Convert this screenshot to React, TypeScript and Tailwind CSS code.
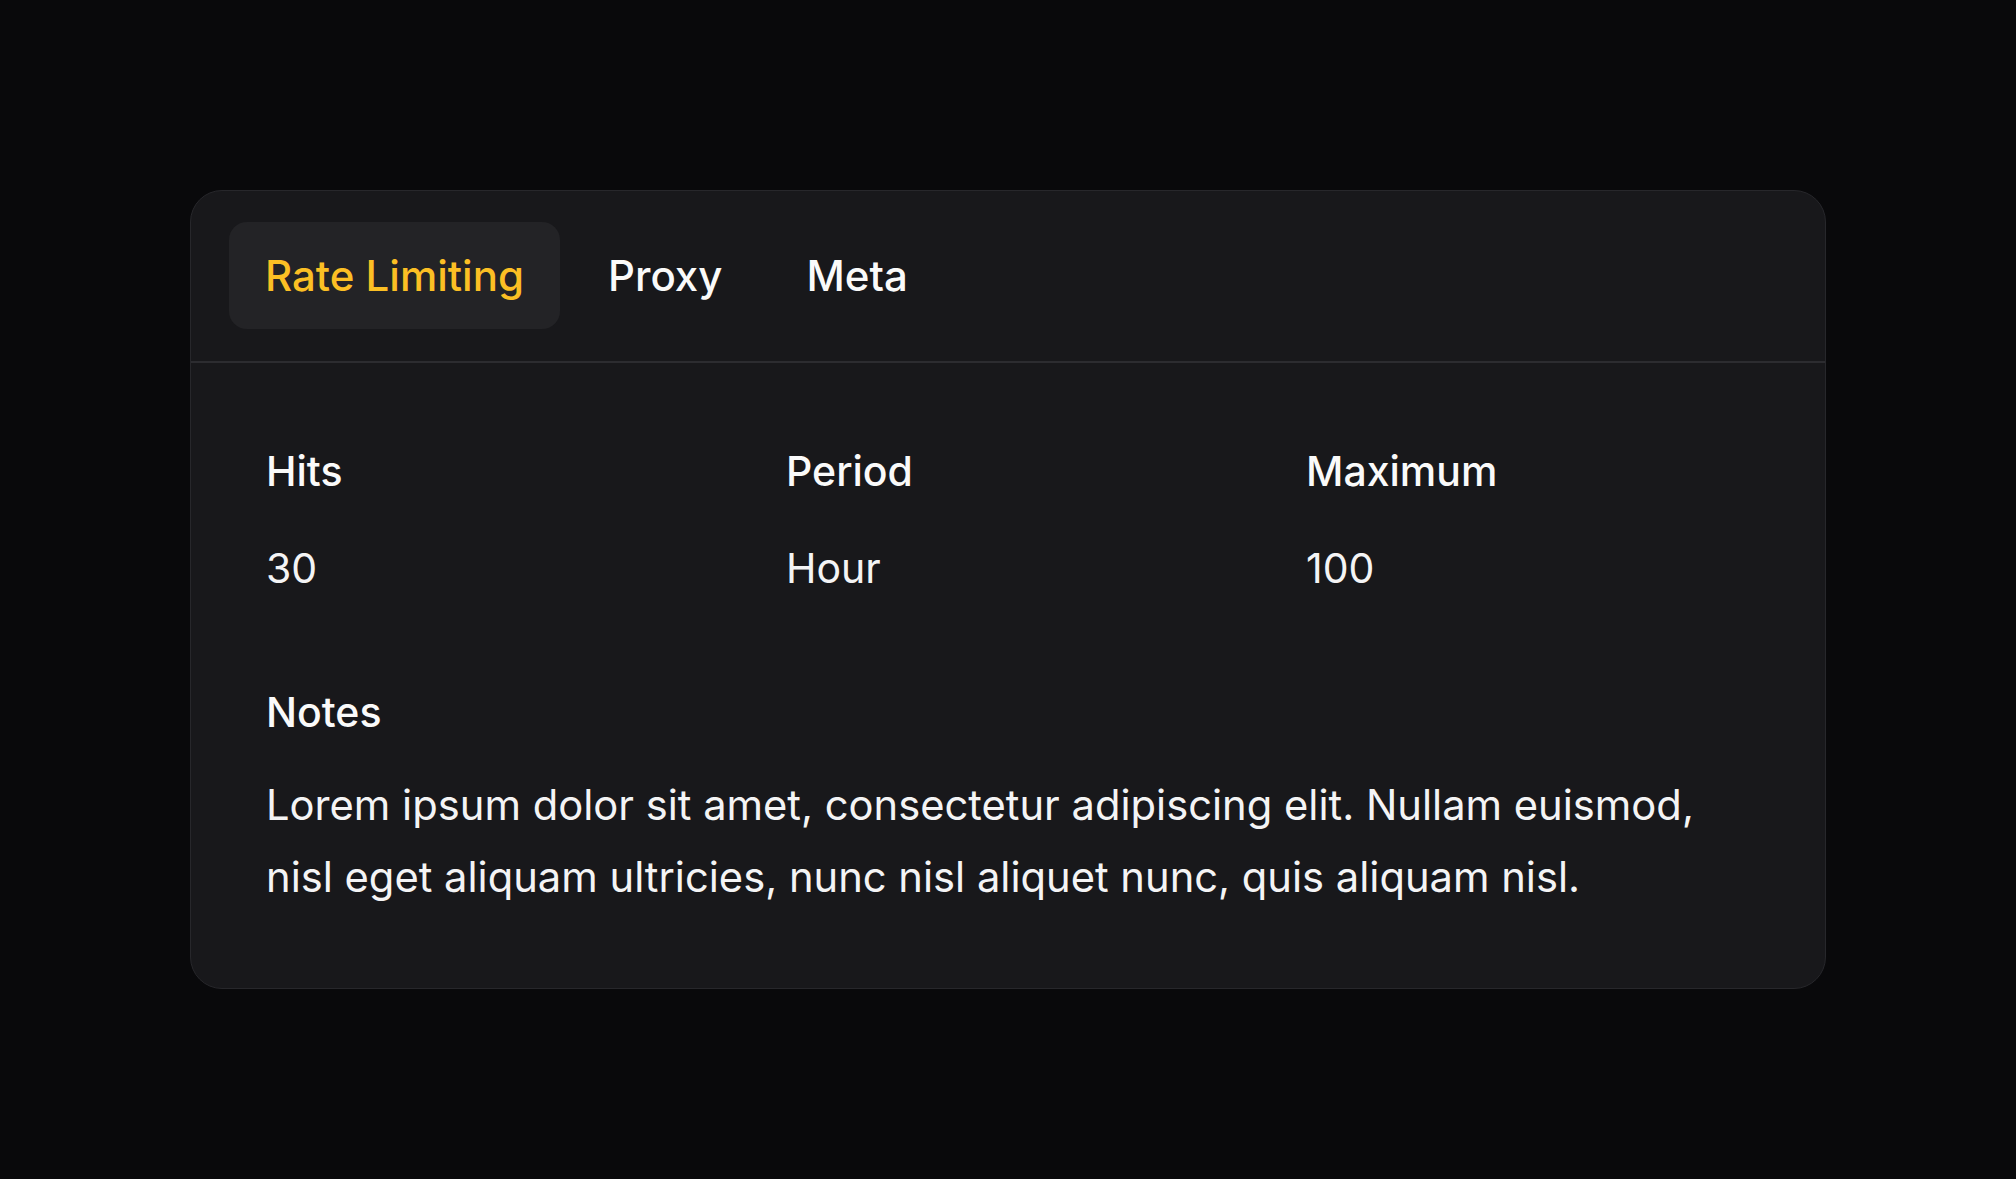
import { useState } from "react";

const tabs = ["Rate Limiting", "Proxy", "Meta"];

const stats = [
  { label: "Hits", value: "30" },
  { label: "Period", value: "Hour" },
  { label: "Maximum", value: "100" },
];

export default function App() {
  const [active, setActive] = useState(0);

  return (
    <div
      className="min-h-screen w-full bg-[#09090b] flex items-center justify-center"
      style={{ fontFamily: "Inter, 'Noto Sans', sans-serif" }}
    >
      <div className="w-[1636px] rounded-[32px] border border-[#27272b] bg-[#18181b] overflow-hidden">
        {/* tabs */}
        <div className="flex gap-3 pl-[38px] pt-[31px] pb-[32px] border-b-2 border-[#2c2c30]">
          {tabs.map((tab, i) => (
            <button
              key={tab}
              onClick={() => setActive(i)}
              className={`h-[107px] px-9 flex items-center rounded-[18px] text-[42px] font-medium leading-[60px] ${
                i === active ? "bg-[#232326] text-[#fbbf24]" : "text-[#fafafa]"
              }`}
            >
              {tab}
            </button>
          ))}
        </div>

        {/* content */}
        <div className="px-[75px] pt-[78px] pb-[75px]">
          <div className="grid grid-cols-3 gap-x-[76px]">
            {stats.map((s) => (
              <div key={s.label} className="flex flex-col gap-[37px]">
                <div className="text-[41px] leading-[60px] font-medium text-[#fafafa]">
                  {s.label}
                </div>
                <div className="text-[41px] leading-[60px] text-[#f4f4f5]">
                  {s.value}
                </div>
              </div>
            ))}
          </div>

          <div className="mt-[84px]">
            <div className="text-[41px] leading-[60px] font-medium text-[#fafafa]">
              Notes
            </div>
            <p className="mt-[27px] max-w-[1460px] text-[41.7px] leading-[72px] text-[#f4f4f5]">
              Lorem ipsum dolor sit amet, consectetur adipiscing elit. Nullam
              euismod, nisl eget aliquam ultricies, nunc nisl aliquet nunc, quis
              aliquam nisl.
            </p>
          </div>
        </div>
      </div>
    </div>
  );
}
